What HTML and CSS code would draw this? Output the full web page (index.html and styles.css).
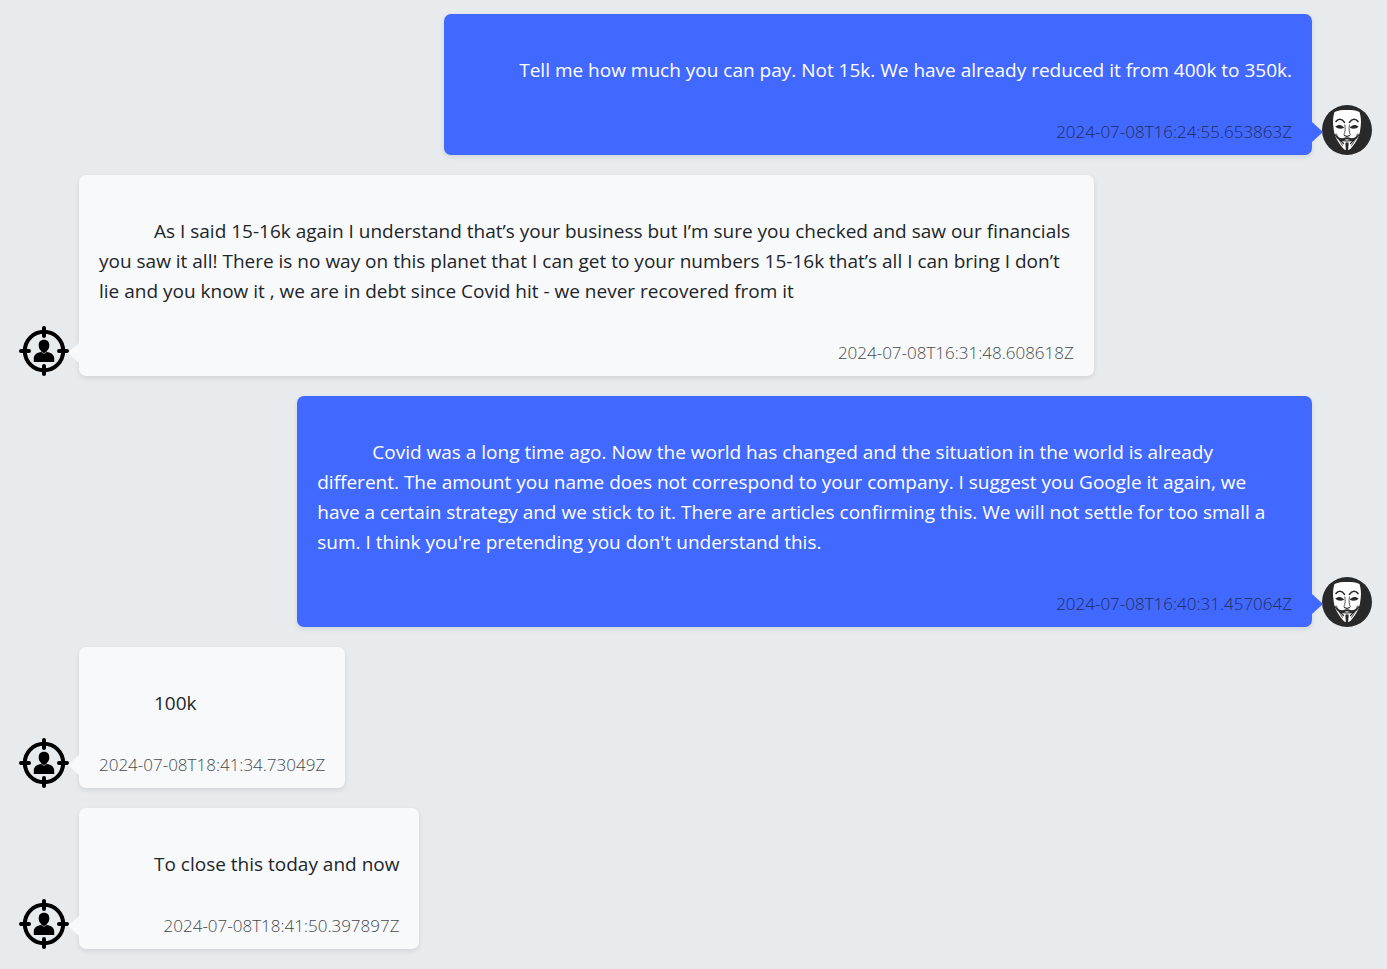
FILE: index.html
```
<!DOCTYPE html>
<html lang="en">
<head>
<meta charset="utf-8">
<title>Chat</title>
<link rel="stylesheet" href="styles.css">
</head>
<body>
<svg class="defs" aria-hidden="true">
  <symbol id="mask" viewBox="0 0 50 50">
    <circle cx="25" cy="25" r="25" fill="#292929"/>
    <path fill="#fff" d="M12.500 7C16 5.300 20 5 25 5s9.500.3 12.500 2c1.500 5 1.700 9 1.300 13-.3 4-.8 7-2 11-2 5-5 9-8 12.500-1 1-2.300 1.500-3.800 1.500s-2.800-.5-3.800-1.500c-3-3.500-6-7.500-8-12.500-1.200-4-1.700-7-2-11-.4-4-.2-8 1.300-13z"/>
    <g fill="none" stroke="#292929" stroke-linecap="round" stroke-linejoin="round">
      <path stroke-width="1.600" d="M14 16.500c2-3 6-3.200 8.500.8M27.500 17.300c2.500-4 6.500-3.800 8.500-.8"/>
      <path stroke-width=".8" d="M22.800 20c1 4 .2 7-.8 9.500M27.400 20c-.8 4-.2 7 .8 9.500M14.500 29c.8 4 3.500 7.500 6 11.500M35.500 29c-.8 4-3.500 7.500-6 11.500"/>
      <path stroke-width="1.200" d="M22.500 30.500l2.500 1 2.500-1M13 29.500c2 4 6 6.500 12 6.500s10-2.500 12-6.500M17.500 34.500l4 4M32.500 34.500l-4 4"/>
    </g>
    <path fill="#292929" d="M13.300 21.500c3-2.600 7-2 9 1.300-3.500 1.500-6.500 1.200-9-1.300zM36.700 21.500c-3-2.600-7-2-9 1.300 3.500 1.500 6.500 1.200 9-1.300zM25 32.500c-2-.6-3 1-5 .8-2 0-4-1.300-5.500-3.300 0 3.500 3 5.500 6 5.300 2 0 3-1.100 4.500-1.100s2.500 1.100 4.500 1.100c3 .2 6-1.800 6-5.300-1.500 2-3.500 3.300-5.500 3.300-2 .2-3-1.400-5-.8zM23.300 37.500h3.400l-.6 7.500h-2.200z"/>
  </symbol>
  <symbol id="target" viewBox="0 0 50 50">
    <circle cx="25" cy="25" r="19.200" fill="none" stroke="#000" stroke-width="4"/>
    <path d="M25 2v8M25 40v8M2 25h8M40 25h8" fill="none" stroke="#000" stroke-width="4" stroke-linecap="round"/>
    <path d="M25 13.800c3.600 0 5.300 2.300 5.300 5.400 0 2.800-1 4.700-2.600 5.800v1c4.500.8 7.500 2.500 7.500 6.500v3.500H14.800v-3.500c0-4 3-5.700 7.500-6.500v-1c-1.600-1.100-2.600-3-2.600-5.800 0-3.100 1.700-5.400 5.300-5.400z"/>
    <path d="M22.500 26.200l2.500 1.300 2.500-1.300" fill="none" stroke="#e8ebee" stroke-width=".6"/>
  </symbol>
</svg>
<main class="chat">
  <article class="message outgoing">
    <svg class="avatar" role="img" aria-label="Operator"><use href="#mask"/></svg>
    <div class="bubble">
      <p class="text">Tell me how much you can pay. Not 15k. We have already reduced it from 400k to 350k.</p>
      <time class="stamp">2024-07-08T16:24:55.653863Z</time>
    </div>
  </article>
  <article class="message">
    <svg class="avatar" role="img" aria-label="Target"><use href="#target"/></svg>
    <div class="bubble">
      <p class="text">As I said 15-16k again I understand that’s your business but I’m sure you checked and saw our financials you saw it all! There is no way on this planet that I can get to your numbers 15-16k that’s all I can bring I don’t lie and you know it , we are in debt since Covid hit - we never recovered from it</p>
      <time class="stamp">2024-07-08T16:31:48.608618Z</time>
    </div>
  </article>
  <article class="message outgoing">
    <svg class="avatar" role="img" aria-label="Operator"><use href="#mask"/></svg>
    <div class="bubble">
      <p class="text">Covid was a long time ago. Now the world has changed and the situation in the world is already different. The amount you name does not correspond to your company. I suggest you Google it again, we have a certain strategy and we stick to it. There are articles confirming this. We will not settle for too small a sum. I think you're pretending you don't understand this.</p>
      <time class="stamp">2024-07-08T16:40:31.457064Z</time>
    </div>
  </article>
  <article class="message">
    <svg class="avatar" role="img" aria-label="Target"><use href="#target"/></svg>
    <div class="bubble">
      <p class="text">100k</p>
      <time class="stamp">2024-07-08T18:41:34.73049Z</time>
    </div>
  </article>
  <article class="message">
    <svg class="avatar" role="img" aria-label="Target"><use href="#target"/></svg>
    <div class="bubble">
      <p class="text">To close this today and now</p>
      <time class="stamp">2024-07-08T18:41:50.397897Z</time>
    </div>
  </article>
</main>
</body>
</html>
```
FILE: styles.css
```
* {
  box-sizing: border-box;
}

body {
  margin: 0;
  background: #e8ebee;
  color: #212529;
  font-family: "Segoe UI", "Open Sans", "Noto Sans", sans-serif;
  font-size: 19px;
  line-height: 30px;
}

.defs {
  display: none;
}

.chat {
  display: flex;
  flex-direction: column;
  gap: 20px;
  padding: 14px 15px 19px 19px;
}

.message {
  display: flex;
  align-items: flex-end;
  gap: 10px;
}

.outgoing {
  flex-direction: row-reverse;
}

.avatar {
  flex: none;
  width: 50px;
  height: 50px;
}

.bubble {
  position: relative;
  display: flex;
  flex-direction: column;
  max-width: 75%;
  padding: 11px 20px;
  border-radius: 7px;
  background: #f8f9fb;
  box-shadow: 0 2px 5px rgba(0, 0, 0, 0.1);
}

.bubble::after {
  content: "";
  position: absolute;
  bottom: 13px;
  left: -11px;
  border: solid transparent;
  border-width: 10px 11px 10px 0;
  border-right-color: #f8f9fb;
}

.outgoing .bubble {
  background: #4269ff;
  color: #fff;
}

.outgoing .bubble::after {
  right: -11px;
  left: auto;
  border-width: 10px 0 10px 11px;
  border-left-color: #4269ff;
}

.text {
  margin: 0;
  padding: 30px 0;
  text-indent: 55px;
}

.stamp {
  align-self: flex-end;
  margin-top: 5px;
  color: #45494d;
  font-size: 17px;
  font-weight: 300;
  line-height: 24px;
}

.outgoing .stamp {
  color: #202c5c;
}
```
